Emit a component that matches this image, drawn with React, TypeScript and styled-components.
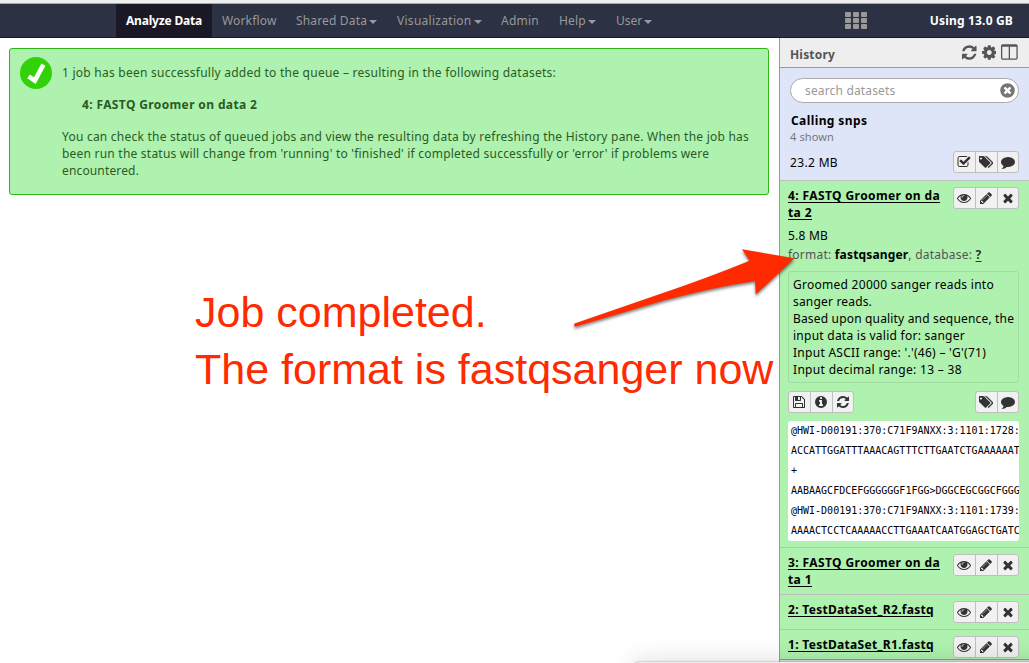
import React from "react";
import styled, { createGlobalStyle } from "styled-components";

const GlobalStyle = createGlobalStyle`
  html, body { margin: 0; padding: 0; overflow: hidden; }
  body { background: #fff; }
  * { box-sizing: border-box; }
`;

const Page = styled.div`
  position: relative;
  display: flex;
  flex-direction: column;
  width: 1029px;
  height: 663px;
  overflow: hidden;
  background: #fff;
  color: #000;
  font: 12px/17px "Noto Sans", "Open Sans", sans-serif;
  letter-spacing: 0.23px;
`;

const WindowEdge = styled.div`
  flex: none;
  height: 4px;
  background: #efeeef;
  border-bottom: 1px solid #a9a7ab;
`;

const Masthead = styled.nav`
  flex: none;
  display: flex;
  height: 34px;
  padding-left: 116px;
  background: #2c3143;
  border-bottom: 1px solid #191827;
`;

const NavItem = styled.a<{ $active?: boolean; $width: number; $ls: number }>`
  display: flex;
  align-items: center;
  flex: none;
  width: ${(p) => p.$width}px;
  height: 33px;
  padding: 0 0 0 10px;
  white-space: nowrap;
  letter-spacing: ${(p) => p.$ls}px;
  color: ${(p) => (p.$active ? "#fff" : "#999")};
  font-weight: ${(p) => (p.$active ? 700 : 400)};
  background: ${(p) => (p.$active ? "#191824" : "transparent")};
`;

const Caret = styled.span`
  margin: 2px 0 0 2px;
  border: 4px solid transparent;
  border-top-color: currentColor;
  border-bottom: 0;
`;

const AppsGrid = styled.div`
  display: grid;
  grid-template-columns: repeat(3, 6px);
  grid-template-rows: repeat(3, 5px);
  gap: 1px 2px;
  margin: 8px 0 0 183px;
  height: 17px;
`;

const AppsCell = styled.i`
  background: #999;
  border-radius: 1px;
`;

const Quota = styled.div`
  margin: 0 16px 0 auto;
  line-height: 33px;
  font-weight: 700;
  color: #fff;
  letter-spacing: 0.18px;
`;

const Columns = styled.div`
  flex: 1;
  display: flex;
  min-height: 0;
`;

const Center = styled.main`
  flex: 1;
  padding: 10px 10px 0 9px;
`;

const DoneMessage = styled.section`
  display: flex;
  height: 147px;
  padding: 8px 0 0 10px;
  color: #2a5c22;
  background: #aff1af;
  border: 1px solid #2fb715;
  border-radius: 3px;
`;

const MessageBody = styled.div`
  margin: 7px 0 0 10px;
  white-space: nowrap;
`;

const Line = styled.div<{ $ls?: number }>`
  letter-spacing: ${(p) => p.$ls ?? 0.23}px;
`;

const DatasetRef = styled.div`
  margin: 15px 0 15px 20px;
  font-weight: 700;
  letter-spacing: 0.37px;
`;

const Panel = styled.aside`
  flex: none;
  display: flex;
  flex-direction: column;
  width: 250px;
  background: #aff1af;
  border-left: 1px solid #999;
`;

const PanelHeader = styled.header`
  flex: none;
  display: flex;
  align-items: center;
  height: 30px;
  padding: 0 11px 1px 10px;
  background: #eee;
  border-bottom: 1px solid #999;
  color: #555;
`;

const PanelTitle = styled.div`
  flex: 1;
  padding-top: 4px;
  font-weight: 700;
  letter-spacing: 0.18px;
`;

const PanelTools = styled.div`
  display: flex;
  align-items: center;
  gap: 5px;
  height: 18px;
`;

const Summary = styled.section`
  flex: none;
  height: 113px;
  padding: 10px 10px 0 10px;
  background: #dfe5f9;
  border-bottom: 1px solid #bfbfbf;
`;

const Search = styled.div`
  display: flex;
  align-items: center;
  justify-content: space-between;
  height: 25px;
  padding: 0 2px 0 14px;
  color: #999;
  letter-spacing: 0.16px;
  background: #fff;
  border: 1px solid #aaa;
  border-radius: 13px;

  svg { color: #777; }
`;

const HistoryName = styled.div`
  margin: 9px 0 0 1px;
  font-weight: 700;
  letter-spacing: 0.4px;
`;

const Shown = styled.div`
  height: 16px;
  font-size: 11px;
  line-height: 15px;
  letter-spacing: 0.13px;
  color: #777;
`;

const SizeRow = styled.div`
  display: flex;
  justify-content: space-between;
  height: 22px;
  margin-top: 6px;
  line-height: 24px;
  letter-spacing: 0.34px;
`;

const Buttons = styled.div`
  flex: none;
  display: flex;
  height: 22px;
  background: #f1f1f1;
  border: 1px solid #bfbfbf;
  border-radius: 3px;
`;

const IconButton = styled.button`
  display: flex;
  align-items: center;
  justify-content: center;
  width: 22px;
  height: 20px;
  padding: 0 1px 1px 0;
  border: 0;
  background: transparent;
  color: #333;

  &:first-child { width: 21px; }
  &:last-child { width: 21px; }
  & + & { border-left: 1px solid #bfbfbf; }
`;

const Dataset = styled.article<{ $height: number }>`
  flex: none;
  height: ${(p) => p.$height}px;
  padding: 6px 10px 0 8px;
  border-bottom: 1px solid #bfbfbf;
`;

const DatasetTop = styled.div`
  display: flex;
  justify-content: space-between;
`;

const DatasetName = styled.div<{ $ls: number }>`
  white-space: nowrap;
  font-weight: 700;
  letter-spacing: ${(p) => p.$ls}px;
  text-decoration: underline;
  text-decoration-thickness: 1px;
  text-underline-offset: 2px;
`;

const FileSize = styled.div`
  margin-top: 6px;
`;

const Format = styled.div`
  margin-top: 2px;
  color: #555;
  white-space: nowrap;

  b { color: #000; letter-spacing: 0.16px; }
  u { color: #333; font-weight: 700; text-underline-offset: 2px; }
`;

const JobInfo = styled.div`
  height: 112px;
  margin-top: 8px;
  padding: 4px;
  white-space: nowrap;
  border: 1px solid #a0dca0;
  border-radius: 3px;
`;

const Actions = styled.div`
  display: flex;
  justify-content: space-between;
  margin: 8px 0;
`;

const Peek = styled.pre`
  height: 120px;
  margin: 0;
  padding: 0 0 0 3px;
  overflow: hidden;
  font: 10px/20px "DejaVu Sans Mono", monospace;
  letter-spacing: 0;
  background: #fff;
  border-radius: 3px;
`;

const StatusStrip = styled.div`
  position: absolute;
  right: 0;
  bottom: 0;
  width: 249px;
  height: 4px;
  background: #ddd;
  border-top: 1px solid #8d978d;
`;

const WindowShadow = styled.div`
  position: absolute;
  left: 633px;
  bottom: -8px;
  width: 420px;
  height: 9px;
  border-radius: 6px 0 0 0;
  background: #eee;
  box-shadow: 0 0 2px #888, 0 2px 24px 2px rgba(0, 0, 0, 0.18);
`;

const Note = styled.div`
  position: absolute;
  left: 195px;
  top: 284px;
  font: 43px/57px "Liberation Sans", Arial, sans-serif;
  letter-spacing: 0;
  white-space: pre;
  color: #ff2a00;
`;

const Arrow = styled.svg`
  position: absolute;
  left: 560px;
  top: 235px;
  filter: drop-shadow(0 2px 1.5px rgba(0, 0, 0, 0.5));
`;

const CIRCLE = "M1664 896a768 768 0 1 1-1536 0 768 768 0 1 1 1536 0z";

const ICONS = {
  refresh: "M1639 1056q0 5-1 7-64 268-268 434.5t-478 166.5q-146 0-282.5-55t-243.5-157l-129 129q-19 19-45 19t-45-19-19-45v-448q0-26 19-45t45-19h448q26 0 45 19t19 45-19 45l-137 137q71 66 161 102t187 36q134 0 250-65t186-179q11-17 53-117 8-23 30-23h192q13 0 22.5 9.5t9.5 22.5zm25-800v448q0 26-19 45t-45 19h-448q-26 0-45-19t-19-45 19-45l138-138q-148-137-349-137-134 0-250 65t-186 179q-11 17-53 117-8 23-30 23h-199q-13 0-22.5-9.5t-9.5-22.5v-7q65-268 270-434.5t480-166.5q146 0 284 55.5t245 156.5l130-129q19-19 45-19t45 19 19 45z",
  cog: "M1152 896q0-106-75-181t-181-75-181 75-75 181 75 181 181 75 181-75 75-181zm512-109v222q0 12-8 23t-20 13l-185 28q-19 54-39 91 35 50 107 138 10 12 10 25t-9 23q-27 37-99 108t-94 71q-12 0-26-9l-138-108q-44 23-91 38-16 136-29 186-7 28-36 28h-222q-14 0-24.5-8.5t-11.5-21.5l-28-184q-49-16-90-37l-141 107q-10 9-25 9-14 0-25-11-126-114-165-168-7-10-7-23 0-12 8-23 15-21 51-66.5t54-70.5q-27-50-41-99l-183-27q-13-2-21-12.5t-8-23.5v-222q0-12 8-23t19-13l186-28q14-46 39-92-40-57-107-138-10-12-10-24 0-10 9-23 26-36 98.5-107.5t94.5-71.5q13 0 26 10l138 107q44-23 91-38 16-136 29-186 7-28 36-28h222q14 0 24.5 8.5t11.5 21.5l28 184q49 16 90 37l142-107q9-9 24-9 13 0 25 10 129 119 165 170 7 8 7 22 0 12-8 23-15 21-51 66.5t-54 70.5q26 50 41 98l183 28q13 2 21 12.5t8 23.5z",
  columns: "M224 1536h608v-1152h-640v1120q0 13 9.5 22.5t22.5 9.5zm1376-32v-1120h-640v1152h608q13 0 22.5-9.5t9.5-22.5zm128-1216v1216q0 66-47 113t-113 47h-1344q-66 0-113-47t-47-113v-1216q0-66 47-113t113-47h1344q66 0 113 47t47 113z",
  check: "M1472 930v318q0 119-84.5 203.5t-203.5 84.5h-832q-119 0-203.5-84.5t-84.5-203.5v-832q0-119 84.5-203.5t203.5-84.5h832q63 0 117 25 15 7 18 23 3 17-9 29l-49 49q-10 10-23 10-3 0-9-2-23-6-45-6h-832q-66 0-113 47t-47 113v832q0 66 47 113t113 47h832q66 0 113-47t47-113v-254q0-13 9-22l64-64q10-10 23-10 6 0 12 3 20 8 20 29zm231-489l-814 814q-24 24-57 24t-57-24l-430-430q-24-24-24-57t24-57l110-110q24-24 57-24t57 24l263 263 647-647q24-24 57-24t57 24l110 110q24 24 24 57t-24 57z",
  tags: "M384 448q0-53-37.5-90.5t-90.5-37.5-90.5 37.5-37.5 90.5 37.5 90.5 90.5 37.5 90.5-37.5 37.5-90.5zm1067 576q0 53-37 90l-491 492q-39 37-91 37-53 0-90-37l-715-716q-38-37-64.5-101t-26.5-117v-416q0-52 38-90t90-38h416q53 0 117 26.5t102 64.5l715 714q37 39 37 91zm384 0q0 53-37 90l-491 492q-39 37-91 37-36 0-59-14t-53-45l470-470q37-37 37-90 0-52-37-91l-715-714q-38-38-102-64.5t-117-26.5h224q53 0 117 26.5t102 64.5l715 714q37 39 37 91z",
  comment: "M1792 896q0 174-120 321.5t-326 233-450 85.5q-70 0-145-8-198 175-460 242-49 14-114 22-17 2-30.5-9t-17.5-29v-1q-3-4-.5-12t2-10 4.5-9.5l6-9 7-8.5 8-9q7-8 31-34.5t34.5-38 31-39.5 32.5-51 27-59 26-76q-157-89-247.5-220t-90.5-281q0-130 71-248.5t191-204.5 286-136.5 348-50.5q244 0 450 85.5t326 233 120 321.5z",
  eye: "M1664 960q-152-236-381-353 61 104 61 225 0 185-131.5 316.5t-316.5 131.5-316.5-131.5-131.5-316.5q0-121 61-225-229 117-381 353 133 205 333.5 326.5t434.5 121.5 434.5-121.5 333.5-326.5zm-720-384q0-20-14-34t-34-14q-125 0-214.5 89.5t-89.5 214.5q0 20 14 34t34 14 34-14 14-34q0-86 61-147t147-61q20 0 34-14t14-34zm848 384q0 34-20 69-140 230-376.5 368.5t-499.5 138.5-499.5-139-376.5-368q-20-35-20-69t20-69q140-229 376.5-368t499.5-139 499.5 139 376.5 368q20 35 20 69z",
  pencil: "M491 1536l91-91-235-235-91 91v107h128v128h107zm523-928q0-22-22-22-10 0-17 7l-542 542q-7 7-7 17 0 22 22 22 10 0 17-7l542-542q7-7 7-17zm-54-192l416 416-832 832h-416v-416zm683 96q0 53-37 90l-166 166-416-416 166-165q36-38 90-38 53 0 91 38l235 234q37 39 37 91z",
  times: "M1490 1322q0 40-28 68l-136 136q-28 28-68 28t-68-28l-294-294-294 294q-28 28-68 28t-68-28l-136-136q-28-28-28-68t28-68l294-294-294-294q-28-28-28-68t28-68l136-136q28-28 68-28t68 28l294 294 294-294q28-28 68-28t68 28l136 136q28 28 28 68t-28 68l-294 294 294 294q28 28 28 68z",
  save: "M512 1536h768v-384h-768v384zm896 0h128v-896q0-14-10-38.5t-20-34.5l-281-281q-10-10-34-20t-39-10v416q0 40-28 68t-68 28h-576q-40 0-68-28t-28-68v-416h-128v1280h128v-416q0-40 28-68t68-28h832q40 0 68 28t28 68v416zm-384-928v-320q0-13-9.5-22.5t-22.5-9.5h-192q-13 0-22.5 9.5t-9.5 22.5v320q0 13 9.5 22.5t22.5 9.5h192q13 0 22.5-9.5t9.5-22.5zm640 32v928q0 40-28 68t-68 28h-1344q-40 0-68-28t-28-68v-1344q0-40 28-68t68-28h928q40 0 88 20t76 48l280 280q28 28 48 76t20 88z",
  info: CIRCLE + "M1152 1376v-160q0-14-9-23t-23-9h-96v-512q0-14-9-23t-23-9h-320q-14 0-23 9t-9 23v160q0 14 9 23t23 9h96v320h-96q-14 0-23 9t-9 23v160q0 14 9 23t23 9h448q14 0 23-9t9-23zm-128-896v-160q0-14-9-23t-23-9h-192q-14 0-23 9t-9 23v160q0 14 9 23t23 9h192q14 0 23-9t9-23z",
  clear: CIRCLE + "M1277 1122q0-26-19-45l-181-181 181-181q19-19 19-45 0-27-19-46l-90-90q-19-19-46-19-26 0-45 19l-181 181-181-181q-19-19-45-19-27 0-46 19l-90 90q-19 19-19 46 0 26 19 45l181 181-181 181q-19 19-19 45 0 27 19 46l90 90q19 19 46 19 26 0 45-19l181-181 181 181q19 19 45 19 27 0 46-19l90-90q19-19 19-46z",
};

type IconName = keyof typeof ICONS;

const BOXES: Partial<Record<IconName, string>> = {
  refresh: "128 0 1536 1792",
  cog: "128 0 1536 1792",
  columns: "64 0 1664 1792",
  tags: "0 0 1835 1792",
};

function Icon({ name, size = 14 }: { name: IconName; size?: number }) {
  const box = BOXES[name] ?? "0 0 1792 1792";
  const width = (Number(box.split(" ")[2]) / 1792) * size;
  return (
    <svg width={width} height={size} viewBox={box} fill="currentColor" fillRule="evenodd" aria-hidden="true">
      <path d={ICONS[name]} />
    </svg>
  );
}

function ButtonGroup({ icons }: { icons: IconName[] }) {
  return (
    <Buttons>
      {icons.map((name) => (
        <IconButton key={name} aria-label={name}>
          <Icon name={name} />
        </IconButton>
      ))}
    </Buttons>
  );
}

const NAV = [
  { label: "Analyze Data", width: 96, ls: -0.19, active: true },
  { label: "Workflow", width: 74, ls: 0.16 },
  { label: "Shared Data", width: 101, ls: 0.16, menu: true },
  { label: "Visualization", width: 104, ls: 0.28, menu: true },
  { label: "Admin", width: 58, ls: 0.24 },
  { label: "Help", width: 57, ls: 0.15, menu: true },
  { label: "User", width: 56, ls: 0, menu: true },
];

const PEEK = [
  "@HWI-D00191:370:C71F9ANXX:3:1101:1728:",
  "ACCATTGGATTTAAACAGTTTCTTGAATCTGAAAAAAT",
  "+",
  "AABAAGCFDCEFGGGGGGF1FGG>DGGCEGCGGCFGGG",
  "@HWI-D00191:370:C71F9ANXX:3:1101:1739:",
  "AAAACTCCTCAAAAACCTTGAAATCAATGGAGCTGATC",
];

const ROW_ICONS: IconName[] = ["eye", "pencil", "times"];

export default function App() {
  return (
    <Page>
      <GlobalStyle />
      <WindowEdge />
      <Masthead>
        {NAV.map((n) => (
          <NavItem key={n.label} $active={n.active} $width={n.width} $ls={n.ls}>
            {n.label}
            {n.menu && <Caret />}
          </NavItem>
        ))}
        <AppsGrid>
          {Array.from({ length: 9 }, (_, i) => (
            <AppsCell key={i} />
          ))}
        </AppsGrid>
        <Quota>Using 13.0 GB</Quota>
      </Masthead>

      <Columns>
        <Center>
          <DoneMessage>
            <svg width="32" height="32" viewBox="0 0 32 32" aria-hidden="true">
              <circle cx="16" cy="16" r="16" fill="#32d108" />
              <path d="M8.6 19.4L14.8 23.6L23.4 7.6" fill="none" stroke="#fff" strokeWidth="4.6" />
            </svg>
            <MessageBody>
              <Line $ls={0.25}>1 job has been successfully added to the queue – resulting in the following datasets:</Line>
              <DatasetRef>4: FASTQ Groomer on data 2</DatasetRef>
              <Line>You can check the status of queued jobs and view the resulting data by refreshing the History pane. When the job has</Line>
              <Line $ls={0.22}>been run the status will change from 'running' to 'finished' if completed successfully or 'error' if problems were</Line>
              <Line $ls={0.15}>encountered.</Line>
            </MessageBody>
          </DoneMessage>
        </Center>

        <Panel>
          <PanelHeader>
            <PanelTitle>History</PanelTitle>
            <PanelTools>
              <Icon name="refresh" size={17} />
              <Icon name="cog" size={17} />
              <Icon name="columns" size={18} />
            </PanelTools>
          </PanelHeader>
          <Summary>
            <Search>
              search datasets
              <Icon name="clear" size={17} />
            </Search>
            <HistoryName>Calling snps</HistoryName>
            <Shown>4 shown</Shown>
            <SizeRow>
              23.2 MB
              <ButtonGroup icons={["check", "tags", "comment"]} />
            </SizeRow>
          </Summary>

          <Dataset $height={367}>
            <DatasetTop>
              <DatasetName $ls={0.4}>
                4: FASTQ Groomer on da
                <br />
                ta 2
              </DatasetName>
              <ButtonGroup icons={ROW_ICONS} />
            </DatasetTop>
            <FileSize>5.8 MB</FileSize>
            <Format>
              format: <b>fastqsanger</b>, database: <u>?</u>
            </Format>
            <JobInfo>
              <Line $ls={0.27}>Groomed 20000 sanger reads into</Line>
              <Line $ls={0.18}>sanger reads.</Line>
              <Line $ls={0.17}>Based upon quality and sequence, the</Line>
              <Line $ls={0.25}>input data is valid for: sanger</Line>
              <Line $ls={0.28}>Input ASCII range: '.'(46) – 'G'(71)</Line>
              <Line $ls={0.32}>Input decimal range: 13 – 38</Line>
            </JobInfo>
            <Actions>
              <ButtonGroup icons={["save", "info", "refresh"]} />
              <ButtonGroup icons={["tags", "comment"]} />
            </Actions>
            <Peek>{PEEK.join("\n")}</Peek>
          </Dataset>

          <Dataset $height={47}>
            <DatasetTop>
              <DatasetName $ls={0.4}>
                3: FASTQ Groomer on da
                <br />
                ta 1
              </DatasetName>
              <ButtonGroup icons={ROW_ICONS} />
            </DatasetTop>
          </Dataset>
          <Dataset $height={35}>
            <DatasetTop>
              <DatasetName $ls={0.31}>2: TestDataSet_R2.fastq</DatasetName>
              <ButtonGroup icons={ROW_ICONS} />
            </DatasetTop>
          </Dataset>
          <Dataset $height={35}>
            <DatasetTop>
              <DatasetName $ls={0.31}>1: TestDataSet_R1.fastq</DatasetName>
              <ButtonGroup icons={ROW_ICONS} />
            </DatasetTop>
          </Dataset>
        </Panel>
      </Columns>

      <StatusStrip />
      <WindowShadow />

      <Note>{"Job completed.\nThe format is fastqsanger now"}</Note>
      <Arrow width="250" height="100" viewBox="560 235 250 100" aria-hidden="true">
        <path
          d="M574.6 323.6L660 294Q710 277 749.5 260.7L742 249.3L794.5 258.3L755.8 294.6L755 281Q715 287 662 301L576 326.6Q573 326.5 574.6 323.6z"
          fill="#ff2a00"
        />
      </Arrow>
    </Page>
  );
}
